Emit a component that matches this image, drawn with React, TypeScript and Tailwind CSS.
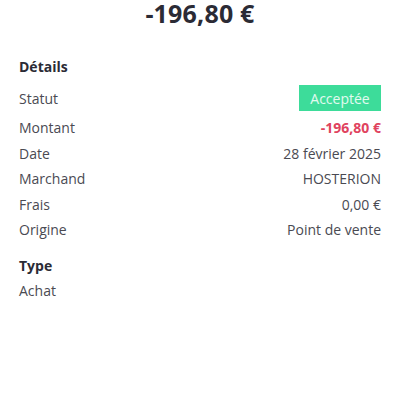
import React from "react";

const rows = [
  { label: "Montant", value: "-196,80 €", red: true },
  { label: "Date", value: "28 février 2025" },
  { label: "Marchand", value: "HOSTERION" },
  { label: "Frais", value: "0,00 €" },
  { label: "Origine", value: "Point de vente" },
];

function App() {
  return (
    <div
      className="w-[400px] h-[400px] bg-white text-[#3a3a44] overflow-hidden"
      style={{ fontFamily: '"Open Sans", "Noto Sans", sans-serif' }}
    >
      <h1 className="text-center text-[25px] leading-[26px] font-bold text-[#2b2b35] tracking-[0.2px]">
        -196,80 €
      </h1>

      <div className="px-[19px] mt-[31px]">
        <h2 className="text-[14px] leading-[20px] font-bold text-[#2b2b35]">Détails</h2>

        <div className="mt-[8px] flex items-center justify-between h-[26px]">
          <span className="text-[14px] text-[#4a4a52]">Statut</span>
          <span className="bg-[#3ddc9a] text-white/85 text-[14px] h-[26px] flex items-center w-[82px] justify-center">
            Acceptée
          </span>
        </div>

        <div className="mt-[4px] flex flex-col">
          {rows.map((r) => (
            <div key={r.label} className="flex items-center justify-between h-[25.5px] text-[14px]">
              <span className="text-[#4a4a52]">{r.label}</span>
              <span className={r.red ? "text-[#e0435e] font-bold" : "text-[#4a4a52]"}>{r.value}</span>
            </div>
          ))}
        </div>

        <h2 className="mt-[13px] text-[14px] leading-[20px] font-bold text-[#2b2b35]">Type</h2>
        <div className="mt-[4px] text-[14px] text-[#4a4a52]">Achat</div>
      </div>
    </div>
  );
}

export default App;
